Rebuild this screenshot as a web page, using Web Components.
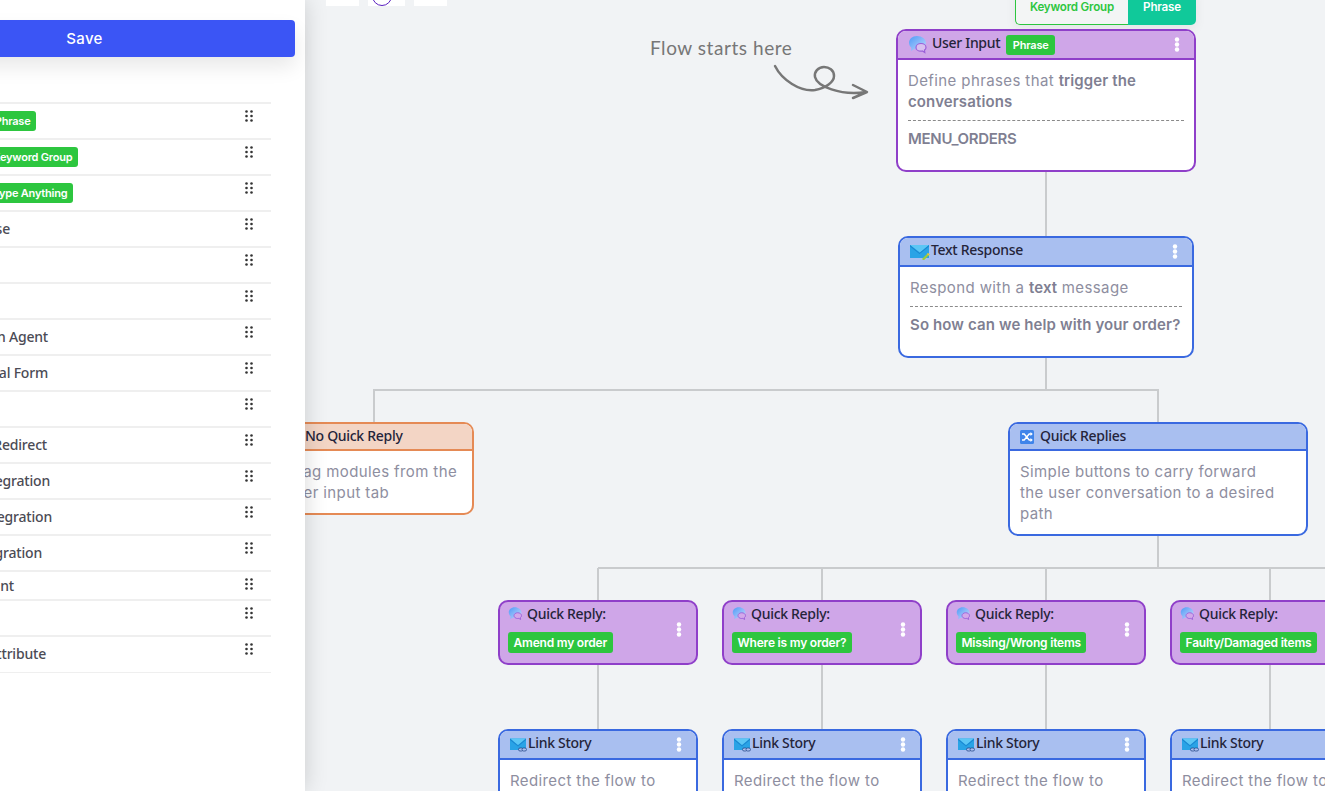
<!DOCTYPE html>
<html>
<head>
<meta charset="utf-8">
<title>Flow builder</title>
<style>
    html, body { margin: 0; height: 100%; overflow: hidden; background: #f1f3f5; }
    body { display: flex; font-family: Inter, 'Open Sans', sans-serif; }
    b { font-weight: 600; color: #7f7f92; letter-spacing: .12px; }
</style>
</head>
<body>
<flow-sidebar>
    <flow-row end="36"><flow-badge>Phrase</flow-badge></flow-row>
    <flow-row end="78"><flow-badge>Keyword Group</flow-badge></flow-row>
    <flow-row end="73"><flow-badge>Type Anything</flow-badge></flow-row>
    <flow-row end="10">se</flow-row>
    <flow-row></flow-row>
    <flow-row></flow-row>
    <flow-row end="48">n Agent</flow-row>
    <flow-row end="48">al Form</flow-row>
    <flow-row></flow-row>
    <flow-row end="47">Redirect</flow-row>
    <flow-row end="50">egration</flow-row>
    <flow-row end="52">egration</flow-row>
    <flow-row end="42">gration</flow-row>
    <flow-row end="14" compact>nt</flow-row>
    <flow-row></flow-row>
    <flow-row end="46">ttribute</flow-row>
</flow-sidebar>

<flow-canvas>
    <flow-node x="896" y="29" w="300" tone="purple" icon="bubble" menu>
        <span slot="title">User Input</span>
        <flow-badge slot="tag">Phrase</flow-badge>
        Define phrases that <b>trigger the conversations</b>
        <b slot="extra" style="letter-spacing:-.3px">MENU_ORDERS</b>
    </flow-node>

    <flow-node x="898" y="236" w="296" tone="blue" icon="mail-pen" menu>
        <span slot="title">Text Response</span>
        Respond with a <b>text</b> message
        <b slot="extra">So how can we help with your order?</b>
    </flow-node>

    <flow-node x="274" y="422" w="200" tone="orange" icon="none">
        <span slot="title">No Quick Reply</span>
        Drag modules from the user input tab
    </flow-node>

    <flow-node x="1008" y="422" w="300" tone="blue" icon="shuffle">
        <span slot="title">Quick Replies</span>
        Simple buttons to carry forward<br>the user conversation to a desired path
    </flow-node>

    <flow-reply x="498" label="Amend my order"></flow-reply>
    <flow-reply x="722" label="Where is my order?"></flow-reply>
    <flow-reply x="946" label="Missing/Wrong items"></flow-reply>
    <flow-reply x="1170" label="Faulty/Damaged items"></flow-reply>

    <flow-node x="498" y="729" w="200" tone="blue" icon="mail-link" menu><span slot="title">Link Story</span>Redirect the flow to</flow-node>
    <flow-node x="722" y="729" w="200" tone="blue" icon="mail-link" menu><span slot="title">Link Story</span>Redirect the flow to</flow-node>
    <flow-node x="946" y="729" w="200" tone="blue" icon="mail-link" menu><span slot="title">Link Story</span>Redirect the flow to</flow-node>
    <flow-node x="1170" y="729" w="200" tone="blue" icon="mail-link" menu><span slot="title">Link Story</span>Redirect the flow to</flow-node>
</flow-canvas>

<script>
const ICONS = {
    none: '',
    bubble: `<svg width="20" height="19" viewBox="0 0 20 19">
        <defs><linearGradient id="bg" x1="0" y1="0" x2="1" y2="1"><stop offset="0" stop-color="#4f9bf7"/><stop offset="1" stop-color="#c3d8fc"/></linearGradient></defs>
        <path d="M9 1C4.300 1 1 4 1 7.800c0 2 .9 3.700 2.400 4.900L3 16l3.400-2c.8.200 1.700.300 2.600.300 4.700 0 9-2.700 9-6.500S13.700 1 9 1z" fill="url(#bg)"/>
        <path d="M13 8.500c-2.800 0-5 1.700-5 3.900 0 2.100 2.200 3.800 5 3.800.5 0 1-.1 1.500-.2l2.300 1.500-.3-2.500c1-.7 1.500-1.600 1.500-2.600 0-2.200-2.200-3.900-5-3.900z" fill="#d8c0f0" stroke="#9a5fd8" stroke-width="1.200"/>
    </svg>`,
    'bubble-small': `<svg width="15" height="15" viewBox="0 0 20 19">
        <defs><linearGradient id="bs" x1="0" y1="0" x2="1" y2="1"><stop offset="0" stop-color="#4f9bf7"/><stop offset="1" stop-color="#c9d8fb"/></linearGradient></defs>
        <path d="M9 1C4.300 1 1 4 1 8.300c0 2 .9 3.700 2.400 4.900L3 17l3.400-2c.8.200 1.700.300 2.600.300 4.700 0 9-2.700 9-7S13.700 1 9 1z" fill="url(#bs)"/>
        <path d="M13 8.500c-2.800 0-5 1.700-5 3.900 0 2.100 2.200 3.800 5 3.800.5 0 1-.1 1.500-.2l2.300 1.500-.3-2.500c1-.7 1.500-1.600 1.500-2.600 0-2.200-2.200-3.900-5-3.900z" fill="#d3a8ea" stroke="#9a5fd8" stroke-width="1.200"/>
    </svg>`,
    'mail-pen': `<svg width="20" height="17" viewBox="0 0 20 17">
        <path d="M0 2h19v13H0z" fill="#29a3e6"/>
        <path d="M0 2h19L10 9.500z" fill="#5cc6f5"/>
        <path d="M0 2l9.500 8L19 2v1.500L9.500 11 0 3.500z" fill="#1a86cf"/>
        <path d="M12 16l6-6 1.600 1.600-6 6z" fill="#9ccb3b"/>
        <path d="M17 11l1-1 1.600 1.600-1 1z" fill="#f0c23c"/>
    </svg>`,
    'mail-link': `<svg width="17" height="15" viewBox="0 0 17 15">
        <path d="M0 1.500h16V13H0z" fill="#29a3e6"/>
        <path d="M0 1.500h16L8 8z" fill="#5cc6f5"/>
        <path d="M0 1.500l8 7 8-7V3L8 9.500 0 3z" fill="#1a86cf"/>
        <rect x="8.500" y="11" width="4.500" height="3" rx="1.500" fill="#a9bff0" stroke="#1d3f80" stroke-width=".7"/>
        <rect x="12" y="11" width="4.500" height="3" rx="1.500" fill="#a9bff0" stroke="#1d3f80" stroke-width=".7"/>
    </svg>`,
    shuffle: `<svg width="14" height="14" viewBox="0 0 14 14">
        <rect width="14" height="14" rx="1.500" fill="#3f84ea"/>
        <path d="M2 4h2.200l5 6H11M2 10h2.200l5-6H11" fill="none" stroke="#fff" stroke-width="1.400"/>
        <path d="M10.500 2l2.300 2-2.300 2zM10.500 8l2.300 2-2.300 2z" fill="#fff"/>
    </svg>`,
};

// space between the icon and the title, the icons do not all have the same padding
const ICON_GAP = { none: 19, bubble: 4, 'mail-pen': 1, 'mail-link': 1, shuffle: 6 };

const KEBAB = `<svg width="6" height="15" viewBox="0 0 6 15" fill="#fff">
    <circle cx="3" cy="2.500" r="2.200"/><circle cx="3" cy="7.500" r="2.200"/><circle cx="3" cy="12.500" r="2.200"/>
</svg>`;

const TONES = {
    purple: { line: '#8f3fc9', head: '#cfa6e8' },
    blue: { line: '#3a69e0', head: '#a9bff0' },
    orange: { line: '#e58a55', head: '#f3d5c5' },
};

class FlowBadge extends HTMLElement {
    constructor() {
        super();
        this.attachShadow({ mode: 'open' }).innerHTML = `
            <style>
                :host {
                    display: inline-flex;
                    align-items: center;
                    height: 20px;
                    padding: 0 5.500px;
                    border-radius: 3px;
                    background: #2dc63f;
                    color: #fff;
                    font: 600 var(--badge-size, 11px) Inter, sans-serif;
                    letter-spacing: -.2px;
                    white-space: nowrap;
                }
            </style>
            <slot></slot>`;
    }
}

class FlowRow extends HTMLElement {
    constructor() {
        super();
        this.attachShadow({ mode: 'open' }).innerHTML = `
            <style>
                :host {
                    display: flex;
                    justify-content: space-between;
                    box-sizing: border-box;
                    height: 36px;
                    margin-top: -1px;
                    margin-bottom: 1px;
                    padding-right: 18px;
                    border-top: 2px solid #efefef;
                    color: #4b4b55;
                    font: 500 14px 'Noto Sans', sans-serif;
                    letter-spacing: -.2px;
                }
                :host([compact]) { height: 29px; }
                #label {
                    display: flex;
                    justify-content: flex-end;
                    align-items: center;
                    box-sizing: border-box;
                    padding-bottom: 1px;
                    white-space: nowrap;
                }
                svg { margin-top: 6px; }
            </style>
            <div id="label"><slot></slot></div>
            <svg width="8" height="12" viewBox="0 0 8 12" fill="#333">
                <circle cx="1.500" cy="1.500" r="1.300"/><circle cx="6.500" cy="1.500" r="1.300"/>
                <circle cx="1.500" cy="6" r="1.300"/><circle cx="6.500" cy="6" r="1.300"/>
                <circle cx="1.500" cy="10.500" r="1.300"/><circle cx="6.500" cy="10.500" r="1.300"/>
            </svg>`;
    }

    connectedCallback() {
        // the list starts 126px left of the window, labels are anchored on their right end
        const end = +this.getAttribute('end') || 0;
        this.shadowRoot.querySelector('#label').style.width = `${126 + end}px`;
    }
}

class FlowSidebar extends HTMLElement {
    constructor() {
        super();
        this.attachShadow({ mode: 'open' }).innerHTML = `
            <style>
                :host {
                    display: block;
                    flex: none;
                    position: relative;
                    z-index: 2;
                    box-sizing: border-box;
                    width: 305px;
                    height: 100%;
                    padding-top: 20px;
                    background: #fff;
                    box-shadow: 0 0 22px rgba(0, 0, 0, .16);
                }
                button {
                    display: block;
                    width: 421px;
                    height: 37px;
                    margin-left: -126px;
                    border: 0;
                    border-radius: 4px;
                    background: #3b55f5;
                    box-shadow: 0 10px 20px rgba(0, 0, 0, .09);
                    color: #fff;
                    font: 500 15px Inter, sans-serif;
                    letter-spacing: .3px;
                }
                #list {
                    width: 397px;
                    margin: 46px 0 0 -126px;
                    border-bottom: 1px solid #efefef;
                }
            </style>
            <button>Save</button>
            <div id="list"><slot></slot></div>`;
    }
}

class FlowNode extends HTMLElement {
    constructor() {
        super();
        this.attachShadow({ mode: 'open' }).innerHTML = `
            <style>
                :host {
                    display: block;
                    position: absolute;
                    box-sizing: border-box;
                    border: 2px solid var(--line);
                    border-radius: 10px;
                    background: #fff;
                    overflow: hidden;
                }
                header {
                    display: flex;
                    align-items: center;
                    box-sizing: border-box;
                    height: 29px;
                    padding: 0 10px;
                    border-bottom: 2px solid var(--line);
                    background: var(--head);
                    color: #24243a;
                    font: 500 14px 'Noto Sans', sans-serif;
                    letter-spacing: -.3px;
                }
                :host(:not([menu])) header { height: 27px; }
                #icon { display: flex; }
                ::slotted([slot=title]) { margin-top: -4px; }
                :host(:not([menu])) ::slotted([slot=title]) { margin-top: -2px; }
                ::slotted(flow-badge) { margin-left: 6px; padding: 0 6.500px; }
                #menu { display: flex; margin-left: auto; margin-right: 4px; }
                #body {
                    padding: 10px;
                    color: #8e8ea0;
                    font: 400 15px/21px Inter, sans-serif;
                    letter-spacing: .39px;
                }
                #extra { padding: 7px 0 11px; margin-top: 8px; border-top: 1px dashed #8a8a8a; }
                #extra.empty { display: none; }
            </style>
            <header>
                <span id="icon"></span>
                <slot name="title"></slot>
                <slot name="tag"></slot>
                <span id="menu"></span>
            </header>
            <div id="body">
                <slot></slot>
                <div id="extra" class="empty"><slot name="extra"></slot></div>
            </div>`;
    }

    connectedCallback() {
        const tone = TONES[this.getAttribute('tone')];
        const icon = this.getAttribute('icon');
        this.style.setProperty('--line', tone.line);
        this.style.setProperty('--head', tone.head);
        this.style.left = `${this.getAttribute('x') - 305}px`;
        this.style.top = `${this.getAttribute('y')}px`;
        this.style.width = `${this.getAttribute('w')}px`;
        const $icon = this.shadowRoot.querySelector('#icon');
        $icon.innerHTML = ICONS[icon];
        $icon.style.marginRight = `${ICON_GAP[icon]}px`;
        if (this.hasAttribute('menu')) {
            this.shadowRoot.querySelector('#menu').innerHTML = KEBAB;
        }
        if (this.querySelector('[slot=extra]')) {
            this.shadowRoot.querySelector('#extra').classList.remove('empty');
        }
    }
}

class FlowReply extends HTMLElement {
    constructor() {
        super();
        this.attachShadow({ mode: 'open' }).innerHTML = `
            <style>
                :host {
                    display: grid;
                    grid-template-columns: 1fr auto;
                    grid-template-rows: 18px 21px;
                    row-gap: 10px;
                    position: absolute;
                    top: 600px;
                    box-sizing: border-box;
                    width: 200px;
                    height: 65px;
                    padding: 2px 14px 0 8px;
                    border: 2px solid #8f3fc9;
                    border-radius: 10px;
                    background: #cfa6e8;
                    --badge-size: 12px;
                }
                #title {
                    display: flex;
                    align-items: center;
                    gap: 4px;
                    color: #24243a;
                    font: 500 14px 'Noto Sans', sans-serif;
                    letter-spacing: -.3px;
                }
                #menu { grid-column: 2; grid-row: 1 / 3; align-self: center; display: flex; margin-top: 2px; }
                flow-badge { justify-self: start; height: 21px; }
            </style>
            <div id="title"><span id="icon"></span><span>Quick Reply:</span></div>
            <div id="menu">${KEBAB}</div>
            <flow-badge></flow-badge>`;
    }

    connectedCallback() {
        this.style.left = `${this.getAttribute('x') - 305}px`;
        this.shadowRoot.querySelector('#icon').innerHTML = ICONS['bubble-small'];
        this.shadowRoot.querySelector('#icon').style.display = 'flex';
        this.shadowRoot.querySelector('flow-badge').textContent = this.getAttribute('label');
    }
}

class FlowCanvas extends HTMLElement {
    constructor() {
        super();
        const drops = [598, 822, 1046, 1270].map((x) => `M${x} 568V600M${x} 665V729`).join('');
        this.attachShadow({ mode: 'open' }).innerHTML = `
            <style>
                :host {
                    display: block;
                    flex: 1;
                    position: relative;
                    background: #f1f3f5;
                }
                #wires { position: absolute; left: -305px; top: 0; }
                #tools { position: absolute; left: 21px; top: 0; display: flex; gap: 9px; }
                #tools span { display: block; width: 33px; height: 6px; background: #fff; overflow: hidden; position: relative; }
                #tools span:nth-child(2) { width: 37px; }
                #tools i { position: absolute; left: 4px; top: -14px; width: 18px; height: 18px; border: 1.500px solid #5a1fc0; border-radius: 50%; }
                #toggle {
                    position: absolute;
                    left: 710px;
                    top: -11px;
                    display: flex;
                    height: 36px;
                    border-radius: 0 0 5px 5px;
                    box-shadow: 0 4px 12px rgba(0, 0, 0, .06);
                    font: 600 11.600px Inter, sans-serif;
                    letter-spacing: -.2px;
                }
                #toggle span { display: flex; align-items: center; justify-content: center; box-sizing: border-box; }
                #keyword { width: 113px; border: 1px solid #2dc63f; border-right: 0; border-radius: 0 0 0 5px; background: #f3f5f5; color: #2dc63f; }
                #phrase { width: 68px; border-radius: 0 0 5px 0; background: #10c99a; color: #fff; }
                #note {
                    position: absolute;
                    left: 345px;
                    top: 36px;
                    color: #777;
                    font: 400 19px/24px Lato, sans-serif;
                    letter-spacing: .55px;
                    white-space: nowrap;
                }
            </style>
            <svg id="wires" width="1325" height="791" fill="none">
                <path stroke="#c9cbcd" stroke-width="2" d="M1046 172V236M1046 358V390M374 422V390H1158V422M1158 536V568M598 568H1325${drops}"/>
                <path stroke="#777" stroke-width="2.500" stroke-linecap="round" stroke-linejoin="round"
                    d="M775 66C782 80 800 92 815 90C826 88 834 82 834 76C834 70 829 67 824 67C818 67 814 72 815 77C817 86 840 96 866 92M853 85L867 92L853 98"/>
            </svg>
            <div id="tools"><span></span><span><i></i></span><span></span></div>
            <div id="toggle"><span id="keyword">Keyword Group</span><span id="phrase">Phrase</span></div>
            <div id="note">Flow starts here</div>
            <slot></slot>`;
    }
}

customElements.define('flow-badge', FlowBadge);
customElements.define('flow-row', FlowRow);
customElements.define('flow-sidebar', FlowSidebar);
customElements.define('flow-node', FlowNode);
customElements.define('flow-reply', FlowReply);
customElements.define('flow-canvas', FlowCanvas);
</script>
</body>
</html>
